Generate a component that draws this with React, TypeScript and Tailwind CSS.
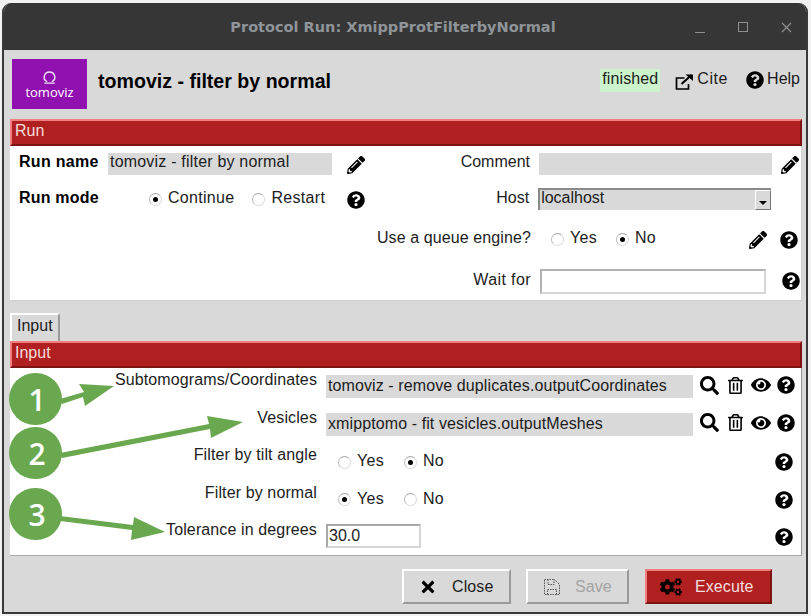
import { FaPencilAlt, FaQuestionCircle, FaSearch, FaRegTrashAlt, FaEye, FaTimes, FaCogs } from "react-icons/fa";

const FONT = "font-['Liberation_Sans',Arial,sans-serif]";

function Radio({ checked, label }: { checked?: boolean; label: string }) {
  return (
    <span className="inline-flex items-center gap-[6px]">
      <span className="w-[13px] h-[13px] mt-[2px] rounded-full bg-white border border-[#d9d9d9] border-t-[#a8a8a8] border-l-[#b8b8b8] flex items-center justify-center">
        {checked && <span className="w-[5px] h-[5px] rounded-full bg-black" />}
      </span>
      <span className="tracking-[0.3px]">{label}</span>
    </span>
  );
}

function Help({ className = "" }: { className?: string }) {
  return <FaQuestionCircle className={`w-[18px] h-[18px] text-black shrink-0 ${className}`} />;
}

function Pencil({ className = "" }: { className?: string }) {
  return <FaPencilAlt className={`w-[18px] h-[18px] text-black shrink-0 ${className}`} />;
}

function SectionBar({ title }: { title: string }) {
  return (
    <div className="h-[27px] bg-[#b02020] border-t-2 border-l-2 border-t-[#f08080] border-l-[#f08080] border-b-2 border-r-2 border-b-[#7d1414] border-r-[#7d1414] text-[#f4dcdc] px-[3px] leading-[20px]">
      {title}
    </div>
  );
}

function ParamIcons() {
  return (
    <div className="flex items-center ml-[7px]">
      <FaSearch className="w-[19px] h-[19px] text-black" />
      <FaRegTrashAlt className="w-[15px] h-[17px] text-black ml-[9px]" />
      <FaEye className="w-[20px] h-[20px] text-black ml-[8px]" />
      <Help className="ml-[6px]" />
    </div>
  );
}

function ParamRow({ label, children }: { label: string; children: React.ReactNode }) {
  return (
    <div className="flex h-[37.5px]">
      <div className="w-[307px] text-right tracking-[0.12px] leading-[18px] pt-[3px] shrink-0">{label}</div>
      <div className="flex-1 flex items-start ml-[9px] pt-[7px] pr-[7px]">{children}</div>
    </div>
  );
}

function SaveIcon() {
  return (
    <svg viewBox="0 0 18 18" className="w-[18px] h-[18px]" fill="none" stroke="#555" strokeWidth="1" strokeDasharray="1.5 1">
      <path d="M1.5 1.5h10l5 5v10h-15z" />
      <path d="M5 1.5v5h6v-5M4.5 16.5v-5h9v5" />
    </svg>
  );
}

export default function App() {
  return (
    <div className={`relative w-[811px] h-[616px] bg-[#f2f2f2] overflow-hidden pt-[3px] pl-[2px] text-[16px] text-[#1c1c1c] ${FONT}`}>
      <div className="w-[806px] h-[611px] flex flex-col rounded-t-[9px] overflow-hidden border-l-2 border-r-2 border-b-2 border-[#3a3a3a] bg-[#d9d9d9]">
        {/* title bar */}
        <div className="h-[47px] shrink-0 bg-[#363636] flex items-center relative">
          <div className="flex-1 text-center font-['DejaVu_Sans',sans-serif] font-bold text-[14.5px] text-[#8f9498] pr-[24px] pt-[2px]">
            Protocol Run: XmippProtFilterbyNormal
          </div>
          <div className="absolute right-[14px] top-[19px] flex items-start gap-[33px]">
            <span className="w-[10px] h-[1px] mt-[10px] bg-[#8f8f8f]" />
            <span className="w-[10px] h-[10px] border border-[#8f8f8f]" />
            <svg viewBox="0 0 11 11" className="w-[11px] h-[11px]" stroke="#8f8f8f" strokeWidth="1.2"><path d="M1 1l9 9M10 1l-9 9" /></svg>
          </div>
        </div>

        <div className="flex-1 flex flex-col px-[6px]">
          {/* header */}
          <div className="h-[69px] flex items-start pt-[9px]">
            <div className="w-[75px] h-[50px] ml-[2px] bg-[#9110b0] flex flex-col items-center justify-center text-white">
              <svg viewBox="0 0 16 16" className="w-[15px] h-[15px] mt-[2px]" fill="none" stroke="#f2e4f6" strokeWidth="1.5">
                <path d="M5.5 12.5C2.5 11 2 8.5 2.4 6.8 3 4 5.3 2.2 8 2.2s5 1.8 5.6 4.6c.4 1.7-.1 4.2-3.1 5.7" />
                <path d="M2.5 14h11" />
              </svg>
              <span className="text-[13px] leading-[15px] font-medium font-['Open_Sans',sans-serif]">tomoviz</span>
            </div>
            <div className="ml-[11px] mt-[9px] text-[19.6px] leading-[26px] font-bold text-black">tomoviz - filter by normal</div>
            <div className="ml-auto flex items-start mt-[10px]">
              <span className="bg-[#ccf4cc] h-[23px] px-[2px] leading-[20px] tracking-[0.1px]">finished</span>
              <svg viewBox="0 0 20 18" className="w-[21px] h-[18px] ml-[14px] mr-[2px] mt-[4px]" fill="none" stroke="#000" strokeWidth="1.7">
                <path d="M10 5H2v11h12v-5" />
                <path d="M7 11l10-9" strokeWidth="2" />
                <path d="M11 1.5h7.5V8z" fill="#000" stroke="none" />
              </svg>
              <span className="leading-[20px] mr-[18px] tracking-[0.6px]">Cite</span>
              <FaQuestionCircle className="w-[18px] h-[18px] mt-[2px] text-black" />
              <span className="leading-[20px] ml-[3px]">Help</span>
            </div>
          </div>

          {/* run section */}
          <div className="w-[792px]">
            <SectionBar title="Run" />
            <div className="h-[155px] bg-white border-r border-b border-[#cfcfcf] leading-[18px]">
              <div className="flex h-[36px] items-start pt-[7px]">
                <div className="w-[90px] pl-[9px] font-bold tracking-[0.3px] text-black">Run name</div>
                <div className="ml-[8px] w-[224px] h-[22px] bg-[#d9d9d9] pl-[2px] tracking-[0.2px]">tomoviz - filter by normal</div>
                <Pencil className="ml-[15px] mt-[3px]" />
                <div className="w-[165px] text-right">Comment</div>
                <div className="ml-[9px] w-[233px] h-[22px] bg-[#d9d9d9]" />
                <Pencil className="ml-[9px] mt-[3px]" />
              </div>
              <div className="flex h-[40px] items-start pt-[7px]">
                <div className="w-[139px] pl-[9px] font-bold tracking-[0.2px] text-black">Run mode</div>
                <Radio checked label="Continue" />
                <span className="w-[18px]" />
                <Radio label="Restart" />
                <Help className="ml-[22px] mt-[2px]" />
                <div className="w-[164px] text-right">Host</div>
                <div className="ml-[9px] w-[233px] h-[22px] bg-[#d9d9d9] border-t-2 border-l-2 border-[#8a8a8a] flex -mt-[1px]">
                  <span className="flex-1 pl-[1px] -mt-[1px]">localhost</span>
                  <span className="w-[16px] h-[20px] bg-[#d9d9d9] border-r border-b border-[#777] border-t border-l border-t-white border-l-white flex items-end justify-center pb-[4px]">
                    <span className="w-0 h-0 border-x-[4px] border-x-transparent border-t-[4px] border-t-black" />
                  </span>
                </div>
              </div>
              <div className="flex h-[42px] items-start pt-[7px]">
                <div className="w-[521px] shrink-0 text-right tracking-[0.1px]">Use a queue engine?</div>
                <span className="flex ml-[20px]"><Radio label="Yes" /></span>
                <span className="flex ml-[19px]"><Radio checked label="No" /></span>
                <Pencil className="ml-[93px] mt-[2px]" />
                <Help className="ml-[13px] mt-[2px]" />
              </div>
              <div className="flex items-start pt-[5px]">
                <div className="w-[521px] text-right tracking-[0.4px] mt-[2px]">Wait for</div>
                <div className="ml-[9px] w-[226px] h-[25px] bg-white border-2 border-[#d6d6d6] border-t-[#b0b0b0] border-l-[#b0b0b0]" />
                <Help className="ml-[16px] mt-[3px]" />
              </div>
            </div>
          </div>

          {/* tab */}
          <div className="mt-[12px] w-[50px] h-[28px] bg-[#d9d9d9] border-t-2 border-l-2 border-r-2 border-t-white border-l-white border-r-[#9a9a9a] rounded-tr-[3px] pl-[5px] leading-[22px]">Input</div>

          {/* input section */}
          <div className="w-[792px]">
            <SectionBar title="Input" />
            <div className="h-[188px] bg-white border-r border-b border-[#a8a8a8] border-r-[#8f8f8f]">
              <ParamRow label="Subtomograms/Coordinates">
                <div className="w-[367px] h-[23px] bg-[#d9d9d9] pl-[2px] leading-[22px] tracking-[0.1px]">tomoviz - remove duplicates.outputCoordinates</div>
                <ParamIcons />
              </ParamRow>
              <ParamRow label="Vesicles">
                <div className="w-[367px] h-[23px] bg-[#d9d9d9] pl-[2px] leading-[22px] tracking-[0.1px]">xmipptomo - fit vesicles.outputMeshes</div>
                <ParamIcons />
              </ParamRow>
              <ParamRow label="Filter by tilt angle">
                <div className="flex gap-[20px] pl-[12px] mt-[1px] leading-[20px] flex-1">
                  <Radio label="Yes" />
                  <Radio checked label="No" />
                </div>
                <Help className="mt-[3px] mr-[1px]" />
              </ParamRow>
              <ParamRow label="Filter by normal">
                <div className="flex gap-[20px] pl-[12px] mt-[1px] leading-[20px] flex-1">
                  <Radio checked label="Yes" />
                  <Radio label="No" />
                </div>
                <Help className="mt-[3px] mr-[1px]" />
              </ParamRow>
              <ParamRow label="Tolerance in degrees">
                <div className="flex-1">
                  <div className="w-[95px] h-[24px] bg-white border-2 border-[#d6d6d6] border-t-[#a8a8a8] border-l-[#a8a8a8] leading-[20px] pl-[1px] -mt-[1px]">30.0</div>
                </div>
                <Help className="mt-[3px] mr-[1px]" />
              </ParamRow>
            </div>
          </div>

          {/* buttons */}
          <div className="flex mt-[13px] ml-[392px]">
            <button className="w-[109px] h-[35px] bg-[#d9d9d9] border-2 border-t-white border-l-white border-r-[#9a9a9a] border-b-[#9a9a9a] flex items-center pl-[16px]">
              <FaTimes className="w-[16px] h-[18px] text-black" />
              <span className="ml-[16px] tracking-[0.1px]">Close</span>
            </button>
            <button className="w-[103px] h-[35px] ml-[15px] bg-[#d9d9d9] border-2 border-t-white border-l-white border-r-[#9a9a9a] border-b-[#9a9a9a] flex items-center pl-[15px]">
              <SaveIcon />
              <span className="ml-[14px] text-[#a3a3a3] tracking-[0.1px]">Save</span>
            </button>
            <button className="w-[127px] h-[35px] ml-[16px] bg-[#b02020] border-2 border-t-[#f08080] border-l-[#f08080] border-r-[#7d1414] border-b-[#7d1414] flex items-center pl-[13px]">
              <FaCogs className="w-[22px] h-[20px] text-black" />
              <span className="ml-[13px] text-[#f6dede] tracking-[0.1px]">Execute</span>
            </button>
          </div>
        </div>
      </div>

      {/* annotation arrows drawn over the form */}
      <svg className="absolute left-0 top-0 pointer-events-none" width="811" height="616" fill="#6aa84f" stroke="none">
        <path d="M60 399L84 392 79 384 114 386 85 406 83 397 62 404z" />
        <path d="M60 453L209 424 207 416 243 422 211 438 210 429 62 458z" />
        <path d="M60 516L133 525 134 517 165 532 131 540 132 530 60 521z" />
      </svg>
      {[
        { n: "1", top: "top-[373px]" },
        { n: "2", top: "top-[427px]" },
        { n: "3", top: "top-[488px]" },
      ].map((c) => (
        <div
          key={c.n}
          className={`absolute left-[9px] ${c.top} w-[53px] h-[52px] pl-[3px] rounded-full bg-[#6aa84f] flex items-center justify-center text-white text-[30px] font-semibold font-['Open_Sans',sans-serif]`}
        >
          {c.n}
        </div>
      ))}
    </div>
  );
}
